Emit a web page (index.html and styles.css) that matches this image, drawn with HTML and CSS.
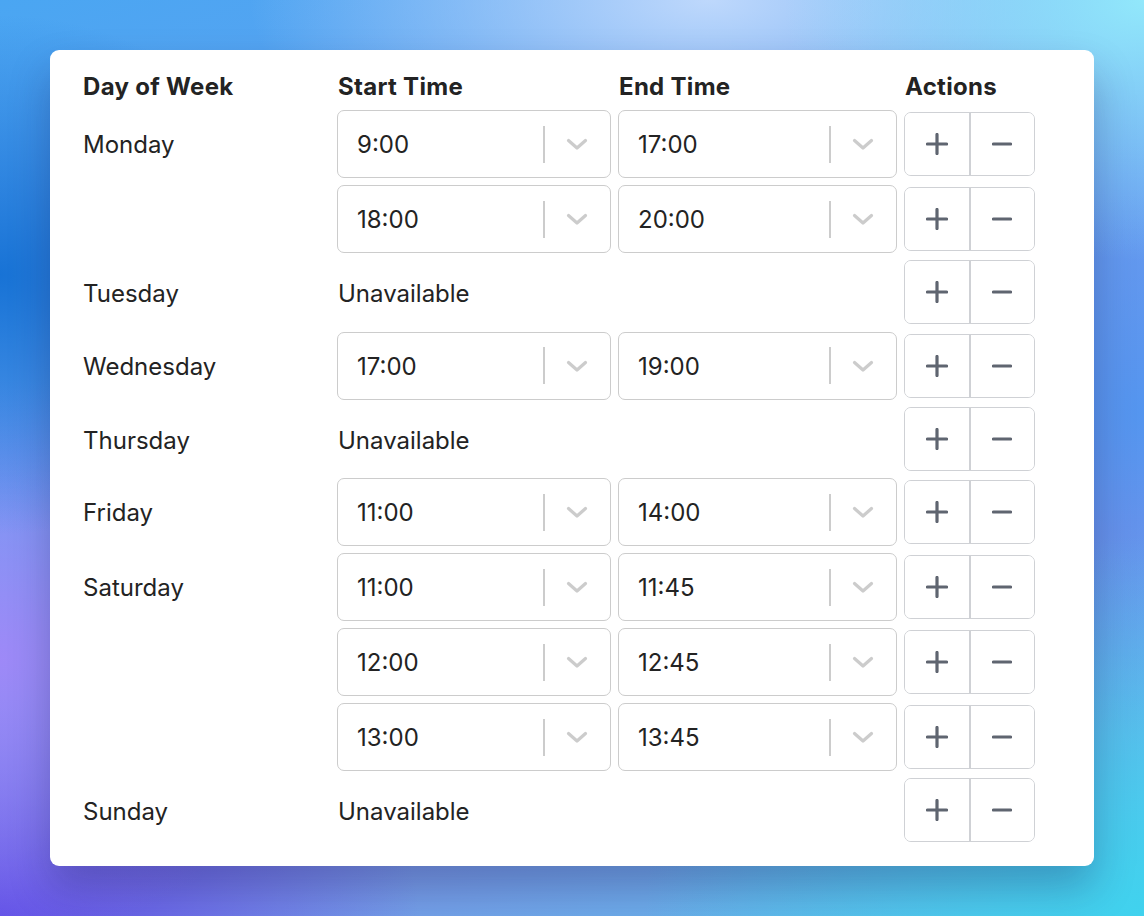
FILE: index.html
```html
<!DOCTYPE html>
<html>
<head>
<meta charset="utf-8">
<link rel="stylesheet" href="styles.css">
</head>
<body>
<div class="bg">
  <div class="card">
    <div class="grid">
      <div class="hd">Day of Week</div>
      <div class="hd">Start Time</div>
      <div class="hd">End Time</div>
      <div class="hd">Actions</div>
    </div>
    <div id="rows"></div>
  </div>
</div>
<script src="app.js"></script>
</body>
</html>
```

FILE: app.js
```js
const data = [
  ["Monday", [["9:00","17:00"],["18:00","20:00"]]],
  ["Tuesday", []],
  ["Wednesday", [["17:00","19:00"]]],
  ["Thursday", []],
  ["Friday", [["11:00","14:00"]]],
  ["Saturday", [["11:00","11:45"],["12:00","12:45"],["13:00","13:45"]]],
  ["Sunday", []]
];
const chev = '<svg class="chev" width="22" height="13" viewBox="0 0 22 13"><path d="M2.5 2.5 L11 10 L19.5 2.5" fill="none" stroke="currentColor" stroke-width="3.2" stroke-linecap="round" stroke-linejoin="round"/></svg>';
const plus = '<svg width="22" height="22" viewBox="0 0 22 22"><path d="M11 1.5V20.5M1.5 11H20.5" stroke="currentColor" stroke-width="3.2" stroke-linecap="round"/></svg>';
const minus = '<svg width="20" height="22" viewBox="0 0 20 22"><path d="M1.5 11H18.5" stroke="currentColor" stroke-width="3.2" stroke-linecap="round"/></svg>';
function sel(v){return '<div class="sel"><span class="val">'+v+'</span><span class="ind"><span class="sep"></span>'+chev+'</span></div>';}
const acts = '<div class="acts"><button class="btn">'+plus+'</button><button class="btn">'+minus+'</button></div>';
let html = '';
for (const [day, slots] of data) {
  if (!slots.length) {
    html += '<div class="grid row un"><div class="day">'+day+'</div><div class="unav">Unavailable</div>'+acts+'</div>';
  } else {
    slots.forEach((s,i)=>{
      html += '<div class="grid row"><div class="day">'+(i===0?day:'')+'</div>'+sel(s[0])+sel(s[1])+acts+'</div>';
    });
  }
}
document.getElementById('rows').innerHTML = html;
```

FILE: styles.css
```css
html, body { margin: 0; padding: 0; }
body {
  font-family: Inter, "Noto Sans", sans-serif;
  color: #232323;
}
.bg {
  width: 1144px;
  height: 916px;
  box-sizing: border-box;
  padding: 50px 50px 0 50px;
  background:
    radial-gradient(ellipse 300px 260px at 0% 30%, rgba(20,112,212,0.95) 0%, rgba(20,112,212,0) 100%),
    radial-gradient(ellipse 320px 280px at 0% 72%, rgba(160,136,248,0.95) 0%, rgba(160,136,248,0) 100%),
    radial-gradient(ellipse 420px 260px at 0% 100%, rgba(96,80,230,1) 0%, rgba(96,80,230,0) 100%),
    radial-gradient(ellipse 500px 380px at 100% 100%, rgba(64,210,238,1) 0%, rgba(64,210,238,0) 100%),
    radial-gradient(ellipse 360px 260px at 100% 0%, rgba(146,232,251,1) 0%, rgba(146,232,251,0) 100%),
    radial-gradient(ellipse 460px 200px at 62% 0%, rgba(190,216,252,1) 0%, rgba(190,216,252,0) 100%),
    radial-gradient(ellipse 300px 320px at 100% 45%, rgba(80,150,240,0.9) 0%, rgba(80,150,240,0) 100%),
    linear-gradient(160deg, #4aa6f2 0%, #6f9ef0 45%, #7f8ee6 70%, #5cc4ec 100%);
}
.card {
  width: 1044px;
  box-sizing: border-box;
  background: #fff;
  border-radius: 9px;
  padding: 23px 0 23px 33px;
  box-shadow: 0 22px 40px rgba(20, 20, 80, 0.28);
}
.grid {
  display: grid;
  grid-template-columns: 247px 274px 279px 131px;
  column-gap: 7px;
  align-items: center;
}
.hd {
  font-weight: 700;
  font-size: 24px;
  line-height: 28px;
  letter-spacing: 0.3px;
  padding-left: 1px;
}
.hd:first-child { padding-left: 0; }
#rows {
  margin-top: 9px;
  display: flex;
  flex-direction: column;
  gap: 7px;
}
.row { height: 68px; align-items: start; }
.row.un { height: 64.5px; }
.day, .unav {
  font-size: 24px;
  line-height: 28px;
  margin-top: 21px;
}
.row.un .day, .row.un .unav { margin-top: 20px; }
.unav { grid-column: 2 / 4; padding-left: 1px; }
.sel {
  height: 68px;
  box-sizing: border-box;
  border: 1px solid #cccccc;
  border-radius: 7px;
  display: flex;
  align-items: center;
  padding-left: 19px;
}
.val {
  flex: 1;
  font-size: 24px;
  line-height: 28px;
  padding-top: 2px;
}
.ind {
  width: 67px;
  height: 100%;
  display: flex;
  align-items: center;
  color: #cccccc;
}
.sep {
  width: 2px;
  height: 37px;
  background: #cccccc;
}
.chev { margin-left: 21px; margin-top: 1px; }
.acts {
  height: 64px;
  margin-top: 2px;
  box-sizing: border-box;
  border: 1px solid #cfd1d5;
  border-radius: 7px;
  display: flex;
  overflow: hidden;
}
.row.un .acts { margin-top: 0; }
.btn {
  flex: 1;
  border: 0;
  background: #fff;
  padding: 0;
  margin: 0;
  color: #5f6570;
  display: flex;
  align-items: center;
  justify-content: center;
}
.btn + .btn { border-left: 2px solid #cfd1d5; }
.btn svg { display: block; }
```
